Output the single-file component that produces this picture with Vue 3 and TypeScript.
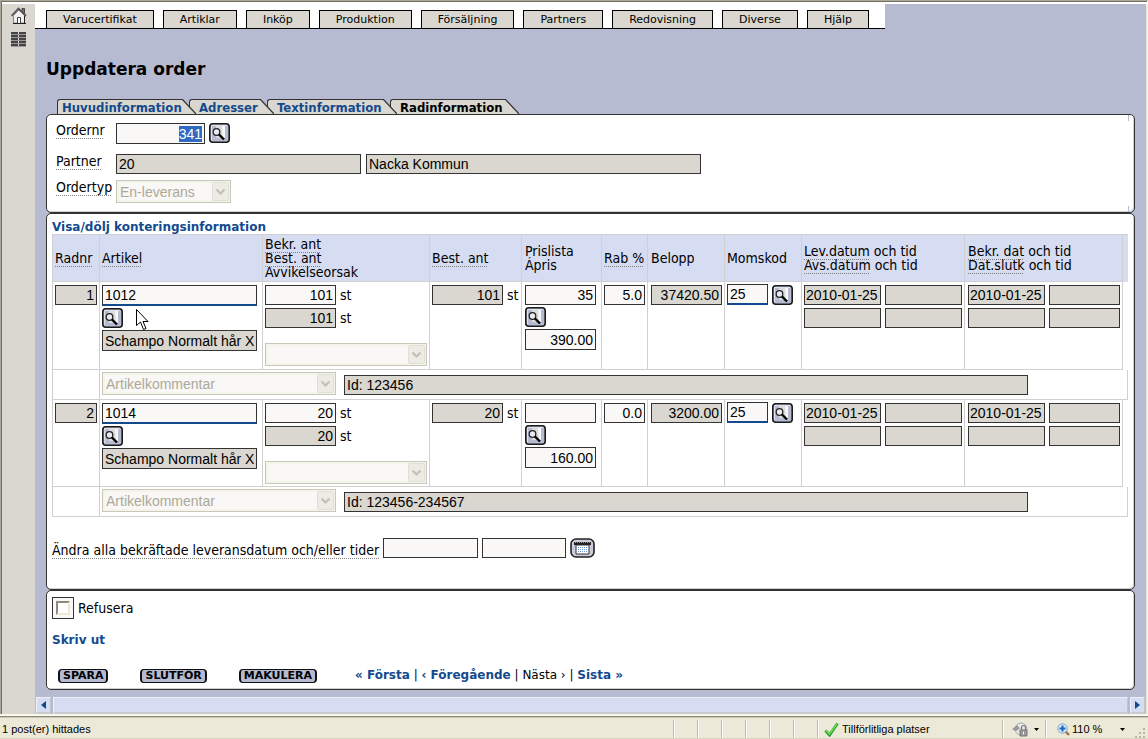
<script setup lang="ts">
import { onMounted, ref } from 'vue'

interface OrderRow {
  nr: string
  article: string
  name: string
  confirmed: string
  ordered: string
  priceList: string
  price: string
  discount: string
  amount: string
  vat: string
  shipDate: string
  confirmDate: string
  comment: string
}

const menu: string[] = ['Varucertifikat', 'Artiklar', 'Inköp', 'Produktion', 'Försäljning', 'Partners', 'Redovisning', 'Diverse', 'Hjälp']

const tabs = [
  { label: 'Huvudinformation', width: 125 },
  { label: 'Adresser', width: 71 },
  { label: 'Textinformation', width: 116 },
  { label: 'Radinformation', width: 115 },
]
const activeTab = ref(3)

const columns = ['nr', 'article', 'confirmed', 'ordered', 'price', 'discount', 'amount', 'vat', 'ship', 'confirm', 'rest']

const orderNr = ref('341')
const orderInput = ref<HTMLInputElement | null>(null)
const refused = ref(false)

const rows = ref<OrderRow[]>([
  {
    nr: '1', article: '1012', name: 'Schampo Normalt hår X', confirmed: '101', ordered: '101', priceList: '35', price: '390.00',
    discount: '5.0', amount: '37420.50', vat: '25', shipDate: '2010-01-25', confirmDate: '2010-01-25', comment: 'Id: 123456',
  },
  {
    nr: '2', article: '1014', name: 'Schampo Normalt hår X', confirmed: '20', ordered: '20', priceList: '', price: '160.00',
    discount: '0.0', amount: '3200.00', vat: '25', shipDate: '2010-01-25', confirmDate: '2010-01-25', comment: 'Id: 123456-234567',
  },
])

onMounted(() => {
  orderInput.value?.focus()
  orderInput.value?.select()
})
</script>

<template>
  <svg class="defs" width="0" height="0" aria-hidden="true">
    <symbol id="lookup" viewBox="0 0 21 20">
      <rect x="0.800" y="0.800" width="19.400" height="18.400" rx="3" fill="#b6bbd2" stroke="#1a1a1a" stroke-width="1.600" />
      <path d="M2.500 17V2.500H18" fill="none" stroke="#dfe2ee" />
      <path d="M7 3h9v12H7z" fill="#dcdcdc" />
      <path d="M13 3h3v12h-2z" fill="#f8f8f8" />
      <circle cx="7.500" cy="9" r="3.300" fill="#e9ebf2" stroke="#222" stroke-width="1.300" />
      <path d="M10 11.500l5 5" stroke="#000" stroke-width="2.400" />
    </symbol>
    <symbol id="arrow" viewBox="0 0 17 19">
      <rect x="0.500" y="0.500" width="16" height="18" rx="1" fill="#ecebe4" stroke="#e0dfd5" />
      <path d="M4.500 7.500l4 4 4-4" fill="none" stroke="#c3c1b7" stroke-width="2.200" />
    </symbol>
  </svg>

  <div class="window">
    <div class="frame">
      <aside class="side">
        <a href="#" aria-label="Hem">
          <svg width="16" height="17" viewBox="0 0 16 17">
            <path d="M11 1.500h2.500v5H11z" fill="#777" stroke="#444" />
            <path d="M2.500 8.500L8 3l5.500 5.500V16h-11z" fill="#f0f0f0" stroke="#888" />
            <path d="M0.500 9L7.500 1.500 15 9" fill="none" stroke="#555" stroke-width="1.800" />
            <path d="M6.500 16v-5.500h3V16" fill="#fff" stroke="#444" />
            <path d="M2 16.500h13M13.500 9v7" stroke="#222" />
          </svg>
        </a>
        <a href="#" aria-label="Meny">
          <svg width="15" height="16" viewBox="0 0 15 16">
            <path d="M0 1h7M0 4h7M0 7h7M0 10h7M0 13h7M8 1h7M8 4h7M8 7h7M8 10h7M8 13h7" stroke="#444" stroke-width="2" />
            <path d="M0 2.500h15M0 5.500h15M0 8.500h15M0 11.500h15M0 14.500h15" stroke="#999" />
          </svg>
        </a>
      </aside>

      <main class="main">
        <nav class="menu">
          <button v-for="item in menu" :key="item" type="button">{{ item }}</button>
        </nav>

        <div class="content">
          <h1>Uppdatera order</h1>

          <div class="tabs" role="tablist">
            <button
              v-for="(tab, i) in tabs"
              :key="tab.label"
              type="button"
              role="tab"
              :aria-selected="activeTab === i"
              :class="['tab', { active: activeTab === i }]"
              :style="{ zIndex: tabs.length - i }"
              @click="activeTab = i"
            >
              <span class="tab-body" :style="{ width: tab.width + 'px' }">{{ tab.label }}</span>
              <svg width="14" height="15" viewBox="0 0 14 15">
                <path d="M0 0L14 15H0z" fill="#d9d7cf" />
                <path d="M-1 0.500H0.500L14 15" fill="none" stroke="#333" stroke-width="1.200" />
              </svg>
            </button>
          </div>

          <section class="panel order">
            <label for="ordernr"><span class="hint">Ordernr</span></label>
            <div class="fields">
              <input id="ordernr" ref="orderInput" v-model="orderNr" class="field num tall w-order" type="text" />
              <button class="lookup" type="button" aria-label="Sök order"><svg><use href="#lookup" /></svg></button>
            </div>
            <label class="partner" for="partner"><span class="hint">Partner</span></label>
            <div class="fields partner">
              <input id="partner" class="field w-partner" type="text" value="20" readonly />
              <input class="field w-name" type="text" value="Nacka Kommun" readonly aria-label="Partnernamn" />
            </div>
            <label for="ordertyp"><span class="hint">Ordertyp</span></label>
            <div class="fields">
              <span class="select w-type">
                <select id="ordertyp" disabled><option>En-leverans</option></select>
                <svg><use href="#arrow" /></svg>
              </span>
            </div>
          </section>

          <section class="panel lines">
            <a class="link toggle" href="#">Visa/dölj konteringsinformation</a>
            <table>
              <colgroup>
                <col v-for="c in columns" :key="c" :class="'c-' + c" />
              </colgroup>
              <thead>
                <tr>
                  <th><span class="hint">Radnr</span></th>
                  <th><span class="hint">Artikel</span></th>
                  <th><span class="hint">Bekr. ant</span><br /><span class="hint">Best. ant</span><br />Avvikelseorsak</th>
                  <th><span class="hint">Best. ant</span></th>
                  <th class="wide">Prislista<br />Ápris</th>
                  <th><span class="hint">Rab %</span></th>
                  <th class="wide">Belopp</th>
                  <th>Momskod</th>
                  <th><span class="hint">Lev.datum</span> och tid<br /><span class="hint">Avs.datum</span> och tid</th>
                  <th class="wide"><span class="hint">Bekr. dat</span> och tid<br /><span class="hint">Dat.slutk</span> och tid</th>
                  <th class="rest"></th>
                </tr>
              </thead>
              <tbody v-for="row in rows" :key="row.nr">
                <tr class="data">
                  <td><input class="field num w-nr" type="text" :value="row.nr" readonly aria-label="Radnr" /></td>
                  <td>
                    <div class="stack">
                      <input v-model="row.article" class="field key w-full" type="text" aria-label="Artikel" />
                      <button class="lookup" type="button" aria-label="Sök artikel"><svg><use href="#lookup" /></svg></button>
                      <input class="field tall w-full" type="text" :value="row.name" readonly aria-label="Artikelnamn" />
                    </div>
                  </td>
                  <td>
                    <div class="stack loose">
                      <div class="unit"><input v-model="row.confirmed" class="field num w-amount" type="text" aria-label="Bekräftat antal" />st</div>
                      <div class="unit"><input class="field num w-amount" type="text" :value="row.ordered" readonly aria-label="Beställt antal" />st</div>
                      <span class="select reason">
                        <select disabled aria-label="Avvikelseorsak"><option></option></select>
                        <svg><use href="#arrow" /></svg>
                      </span>
                    </div>
                  </td>
                  <td><div class="unit"><input class="field num w-amount" type="text" :value="row.ordered" readonly aria-label="Best. ant" />st</div></td>
                  <td class="wide">
                    <div class="stack">
                      <input v-model="row.priceList" class="field num w-amount" type="text" aria-label="Prislista" />
                      <button class="lookup" type="button" aria-label="Sök prislista"><svg><use href="#lookup" /></svg></button>
                      <input v-model="row.price" class="field num tall w-amount" type="text" aria-label="Ápris" />
                    </div>
                  </td>
                  <td><input v-model="row.discount" class="field num w-small" type="text" aria-label="Rabatt" /></td>
                  <td class="wide"><input class="field num w-amount" type="text" :value="row.amount" readonly aria-label="Belopp" /></td>
                  <td class="vat">
                    <div class="fields">
                      <input v-model="row.vat" class="field key w-small" type="text" aria-label="Momskod" />
                      <button class="lookup" type="button" aria-label="Sök momskod"><svg><use href="#lookup" /></svg></button>
                    </div>
                  </td>
                  <td>
                    <div class="dates">
                      <input class="field w-date" type="text" :value="row.shipDate" readonly aria-label="Lev.datum" />
                      <input class="field w-date" type="text" readonly aria-label="Lev.tid" />
                      <input class="field w-date" type="text" readonly aria-label="Avs.datum" />
                      <input class="field w-date" type="text" readonly aria-label="Avs.tid" />
                    </div>
                  </td>
                  <td class="wide">
                    <div class="dates">
                      <input class="field w-date" type="text" :value="row.confirmDate" readonly aria-label="Bekr. dat" />
                      <input class="field w-amount" type="text" readonly aria-label="Bekr. tid" />
                      <input class="field w-date" type="text" readonly aria-label="Dat.slutk" />
                      <input class="field w-amount" type="text" readonly aria-label="Slutk tid" />
                    </div>
                  </td>
                  <td class="rest"></td>
                </tr>
                <tr class="note">
                  <td></td>
                  <td colspan="10">
                    <div class="comment">
                      <span class="select w-comment">
                        <select disabled aria-label="Kommentarstyp"><option>Artikelkommentar</option></select>
                        <svg><use href="#arrow" /></svg>
                      </span>
                      <input class="field w-note" type="text" :value="row.comment" readonly aria-label="Kommentar" />
                    </div>
                  </td>
                </tr>
              </tbody>
            </table>
            <div class="change">
              <label for="all-date"><span class="hint">Ändra alla bekräftade leveransdatum och/eller tider</span></label>
              <input id="all-date" class="field w-alldate" type="text" />
              <input class="field w-alltime" type="text" aria-label="Tid" />
              <button class="calendar" type="button" aria-label="Välj datum">
                <svg width="25" height="20" viewBox="0 0 25 20">
                  <rect x="1" y="1" width="23" height="18" rx="5" fill="#c9cbd8" stroke="#222" stroke-width="1.600" />
                  <path d="M6 7h13v9H6z" fill="#fff" stroke="#333" />
                  <path d="M4 5.500h17" stroke="#222" stroke-width="3" />
                  <path d="M5 4.500h15" stroke="#999" stroke-dasharray="1 1" />
                  <path d="M8 9.500h9M8 11.500h9M8 13.500h9" stroke="#6b93d6" stroke-dasharray="1 1" />
                </svg>
              </button>
            </div>
          </section>

          <section class="panel actions">
            <label class="refuse"><span class="box"><input v-model="refused" type="checkbox" /></span>Refusera</label>
            <a class="link print" href="#">Skriv ut</a>
            <div class="footer">
              <div class="buttons">
                <button type="button">SPARA</button>
                <button type="button">SLUTFÖR</button>
                <button type="button">MAKULERA</button>
              </div>
              <nav class="pager">
                <a class="link" href="#">« Första</a> | <a class="link" href="#">‹ Föregående</a> | <span>Nästa ›</span> | <a class="link" href="#">Sista »</a>
              </nav>
            </div>
          </section>
        </div>

        <div class="scroll">
          <button type="button" aria-label="Rulla åt vänster"><svg width="5" height="8" viewBox="0 0 5 8"><path d="M5 0v8L0 4z" fill="#134a8e" /></svg></button>
          <div class="thumb"></div>
          <button type="button" aria-label="Rulla åt höger"><svg width="5" height="8" viewBox="0 0 5 8"><path d="M0 0v8l5-4z" fill="#134a8e" /></svg></button>
        </div>
      </main>
    </div>

    <footer class="status">
      <span class="message">1 post(er) hittades</span>
      <span v-for="n in 6" :key="n" class="cell empty"></span>
      <span class="cell zone">
        <svg width="15" height="15" viewBox="0 0 15 15"><path d="M1.500 8.500l4 4.500L13.500 1.500" fill="none" stroke="#2e9e2a" stroke-width="3" /><path d="M2 8.500l3.500 3.500L13 2" fill="none" stroke="#6fdc58" stroke-width="1.300" /></svg>
        Tillförlitliga platser
      </span>
      <span class="cell lock">
        <svg width="17" height="15" viewBox="0 0 17 15">
          <circle cx="9" cy="7" r="6" fill="#e6e6e6" stroke="#aaa" />
          <path d="M0 7.500L5 3l3 3.500-4 2.500z" fill="#999" />
          <path d="M8 8h7v6H8z" fill="#999" stroke="#777" />
          <path d="M9.500 8V5.500a2 2 0 0 1 4 0V8" fill="none" stroke="#777" stroke-width="1.200" />
          <path d="M11.500 9.500v3" stroke="#eee" />
        </svg>
        <svg width="5" height="3" viewBox="0 0 5 3"><path d="M0 0h5L2.500 3z" /></svg>
      </span>
      <span class="cell zoom">
        <svg width="13" height="13" viewBox="0 0 13 13">
          <path d="M8 8l4 4" stroke="#a8703c" stroke-width="2.400" />
          <circle cx="5.500" cy="5.500" r="4.700" fill="#d7ebfb" stroke="#7fa3c8" />
          <path d="M5.500 2.500v6M2.500 5.500h6" stroke="#1667c4" stroke-width="2" />
        </svg>
        <span class="percent">110 %</span>
        <svg width="5" height="3" viewBox="0 0 5 3"><path d="M0 0h5L2.500 3z" /></svg>
      </span>
      <svg class="grip" width="12" height="12" viewBox="0 0 12 12"><path d="M9 1h2v2H9zM5 5h2v2H5zM9 5h2v2H9zM1 9h2v2H1zM5 9h2v2H5zM9 9h2v2H9z" fill="#bab7a2" /></svg>
    </footer>

    <svg class="pointer" width="13" height="22" viewBox="0 0 13 22" aria-hidden="true">
      <path d="M0.500 0.500V16.500L4.500 13l3 7.500 2.500-1-3-7H12z" fill="#fff" stroke="#000" />
    </svg>
  </div>
</template>

<style>
body {
  margin: 0;
}
</style>

<style scoped>
.defs,
.pointer {
  position: absolute;
}
.pointer {
  left: 136px;
  top: 309px;
  pointer-events: none;
}
.window {
  position: relative;
  display: flex;
  flex-direction: column;
  min-height: 100vh;
  box-sizing: border-box;
  font-family: "DejaVu Sans Condensed", "DejaVu Sans", Verdana, sans-serif;
  font-size: 14px;
  line-height: 14px;
  color: #000;
  background: #ece9d8;
}
button {
  font: inherit;
  color: inherit;
  padding: 0;
  border: 0;
  background: none;
  cursor: pointer;
}
.frame {
  flex: 1;
  display: flex;
  border-top: 1px solid #aca899;
  border-left: 1px solid #aca899;
  border-right: 1px solid #f4f1e2;
  box-shadow: inset 1px 1px #716f64, inset 0 4px #fff;
  padding: 3px 1px 0 1px;
}
.side {
  width: 33px;
  background: #d9d7cf;
  display: flex;
  flex-direction: column;
  align-items: center;
  padding-top: 3px;
  gap: 8px;
  box-sizing: border-box;
}
.side a,
.side svg {
  display: block;
}
.main {
  flex: 1;
  display: flex;
  flex-direction: column;
  background: #b6bbd2;
}
.menu {
  display: flex;
  align-items: flex-end;
  gap: 9px;
  width: 839px;
  height: 24px;
  padding-left: 11px;
  background: #fff;
  border-bottom: 1px solid #000;
  font-family: "DejaVu Sans", Verdana, sans-serif;
  font-size: 11px;
}
.menu button {
  height: 18px;
  padding: 0 16px;
  background: #d9d7cf;
  border: 1px solid #000;
  border-bottom: 0;
}
.content {
  flex: 1;
  padding: 0 11px 7px;
}
h1 {
  margin: 30px 0 20px;
  font-family: "DejaVu Sans", Verdana, sans-serif;
  font-size: 17px;
  line-height: 20px;
}
.tabs {
  display: flex;
  height: 15px;
  padding-left: 11px;
}
.tab {
  position: relative;
  display: flex;
  margin-right: -7px;
  font-size: 13px;
  font-weight: bold;
  color: #134a8e;
}
.tab.active {
  color: #000;
}
.tab-body {
  box-sizing: border-box;
  height: 15px;
  padding-left: 9px;
  text-align: left;
  line-height: 15px;
  white-space: nowrap;
  background: #d9d7cf;
  border: 1px solid #333;
  border-width: 1px 0 0 1px;
  border-top-left-radius: 3px;
}
.tab:first-child .tab-body {
  padding-left: 4px;
}
.panel {
  position: relative;
  background: #fff;
  border: 1px solid #333;
  border-radius: 5px;
  box-shadow: inset -1px -1px #d0d0d0;
}
.order {
  display: grid;
  grid-template-columns: 60px 1fr;
  padding: 8px 9px 9px;
  row-gap: 6px;
}
.order::before,
.order::after {
  content: "";
  position: absolute;
  right: 5px;
  width: 1px;
  height: 6px;
  background: #b6bbd2;
}
.order::before {
  top: 0;
}
.order::after {
  bottom: 0;
}
.order label {
  line-height: 15px;
}
.fields {
  display: flex;
  gap: 4px;
  align-items: flex-start;
}
.order .partner {
  padding-top: 4px;
  gap: 5px;
}
.hint {
  text-decoration: underline dotted #808080 1px;
  text-underline-offset: 3px;
  text-decoration-skip-ink: none;
}
.field {
  box-sizing: border-box;
  height: 20px;
  margin: 0;
  padding: 0 2px;
  border: 1px solid #333;
  border-radius: 0;
  outline: 0;
  background: #f9f8f6;
  color: #000;
  font-family: "Liberation Sans", Arial, sans-serif;
  font-size: 14px;
  line-height: 16px;
}
.field:read-only {
  background: #d9d7cf;
}
.field::selection {
  background: #316ac5;
  color: #fff;
}
.num {
  text-align: right;
}
.tall {
  height: 21px;
}
.key {
  height: 21px;
  border-bottom: 2px solid #134a8e;
}
.w-order { width: 89px; }
.w-partner { width: 245px; }
.w-name { width: 335px; }
.w-type { width: 115px; }
.w-nr { width: 42px; }
.w-full { width: 155px; }
.w-amount { width: 71px; }
.w-small { width: 41px; }
.w-date { width: 77px; padding: 0 1px; }
.w-comment { width: 234px; }
.w-note { width: 684px; }
.w-alldate { width: 95px; }
.w-alltime { width: 84px; }
.lookup,
.lookup svg {
  display: block;
  width: 21px;
  height: 20px;
}
.select {
  position: relative;
  display: block;
  height: 23px;
}
.select select {
  box-sizing: border-box;
  display: block;
  width: 100%;
  height: 23px;
  padding: 0 3px;
  appearance: none;
  border: 1px solid #c9c7ba;
  border-radius: 0;
  box-shadow: inset 0 0 0 2px #f5f4ea;
  background: #f9f8f6;
  color: #aca899;
  opacity: 1;
  font-family: "Liberation Sans", Arial, sans-serif;
  font-size: 14px;
}
.select svg {
  position: absolute;
  right: 2px;
  top: 2px;
  width: 17px;
  height: 19px;
}
.link {
  color: #134a8e;
  font-family: "DejaVu Sans", Verdana, sans-serif;
  font-size: 12px;
  font-weight: bold;
  text-decoration: none;
}
.lines {
  padding: 6px 6px 31px 5px;
}
.toggle {
  display: block;
}
table {
  width: 100%;
  table-layout: fixed;
  border-spacing: 0;
}
.c-nr { width: 47px; }
.c-article { width: 163px; }
.c-confirmed { width: 167px; }
.c-ordered { width: 92px; }
.c-price { width: 80px; }
.c-discount { width: 46px; }
.c-amount,
.c-vat { width: 77px; }
.c-ship { width: 163px; }
.c-confirm { width: 158px; }
th,
td {
  box-sizing: border-box;
  border: 0 solid #d0d0d0;
  border-width: 0 0 1px 1px;
}
th {
  height: 48px;
  padding: 0 0 0 2px;
  border-top-width: 1px;
  background: #d6dcf1;
  font-weight: normal;
  text-align: left;
  white-space: nowrap;
}
td {
  padding: 3px 0 0 2px;
  vertical-align: top;
}
.wide {
  padding-left: 3px;
}
.rest {
  border-bottom-width: 0;
}
.vat {
  padding-top: 2px;
}
.vat .lookup {
  margin-top: 1px;
}
.data td {
  height: 87px;
}
thead + tbody .data td {
  height: 88px;
}
.data td > .field {
  display: block;
}
.note td {
  height: 30px;
}
.note td:last-child {
  border-right-width: 1px;
  padding-top: 2px;
}
.stack {
  display: flex;
  flex-direction: column;
  align-items: flex-start;
  gap: 2px;
}
.loose {
  gap: 3px;
}
.unit {
  display: flex;
  align-items: center;
  gap: 4px;
  height: 20px;
}
.reason {
  width: 162px;
  margin-top: 12px;
}
.dates {
  display: flex;
  flex-wrap: wrap;
  gap: 3px 4px;
}
.comment {
  display: flex;
  align-items: flex-end;
  gap: 8px;
}
.change {
  display: flex;
  align-items: center;
  gap: 4px;
  margin-top: 21px;
}
.change label {
  padding-top: 4px;
}
.calendar,
.calendar svg {
  display: block;
}
.actions {
  padding: 6px 5px;
}
.refuse {
  display: flex;
  align-items: center;
  gap: 4px;
}
.box {
  box-sizing: border-box;
  display: flex;
  width: 22px;
  height: 22px;
  padding: 3px;
  border: 1px solid #333;
  background: #f9f8f6;
}
.box input {
  box-sizing: border-box;
  width: 14px;
  height: 14px;
  margin: 0;
  appearance: none;
  background: #fff;
  border: 2px solid;
  border-color: #8e8b7c #ece9d8 #ece9d8 #8e8b7c;
}
.box input:checked {
  background: #333;
}
.print {
  display: block;
  width: fit-content;
  margin-top: 13px;
  line-height: 16px;
}
.footer {
  display: flex;
  gap: 38px;
  margin-top: 21px;
  padding-left: 6px;
}
.buttons {
  display: flex;
  gap: 32px;
}
.buttons button {
  box-sizing: border-box;
  height: 14px;
  padding: 0 3px;
  border: 1px solid #111;
  border-width: 1px 2px;
  border-radius: 4px;
  background: #b6bbd2;
  font-family: "DejaVu Sans", Verdana, sans-serif;
  font-size: 11px;
  line-height: 12px;
  font-weight: bold;
}
.pager {
  height: 14px;
  font-family: "DejaVu Sans", Verdana, sans-serif;
  font-size: 12px;
  line-height: 13px;
  white-space: nowrap;
}
.scroll {
  display: flex;
  gap: 2px;
  height: 17px;
  padding: 0 1px;
}
.scroll button,
.thumb {
  box-sizing: border-box;
  display: flex;
  align-items: center;
  justify-content: center;
  width: 15px;
  background: #d6dcf1;
  border: 1px solid #eef1fa;
  border-right-color: #c2c6cc;
  border-bottom: 2px solid #c8cbce;
}
.thumb {
  flex: 1;
}
.status {
  display: flex;
  align-items: stretch;
  box-sizing: border-box;
  height: 25px;
  padding-top: 3px;
  border-top: 2px solid #fbf9ee;
  box-shadow: inset 0 1px #8d8a7e, inset 0 2px #c9c6b4, inset 0 -1px #d8d5c2;
  font-family: "Liberation Sans", Tahoma, sans-serif;
  font-size: 11px;
}
.message {
  flex: 1;
  padding-left: 2px;
  line-height: 20px;
}
.cell {
  box-sizing: border-box;
  display: flex;
  align-items: center;
  height: 18px;
  margin-top: 1px;
  border-left: 1px solid #c0bda8;
  box-shadow: inset 1px 0 #fff;
}
.empty {
  width: 24px;
}
.zone {
  width: 185px;
  padding-left: 6px;
  gap: 3px;
}
.lock {
  width: 43px;
  padding-left: 9px;
  gap: 5px;
}
.zoom {
  width: 89px;
  padding-left: 11px;
  gap: 2px;
}
.percent {
  width: 46px;
}
.grip {
  align-self: flex-end;
  margin-right: 2px;
}
</style>
